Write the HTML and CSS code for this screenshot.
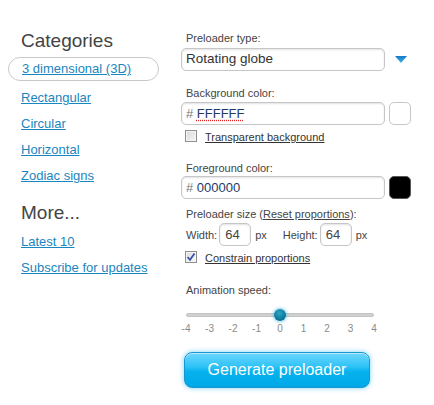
FILE: index.html
```html
<!DOCTYPE html>
<html>
<head>
<meta charset="utf-8">
<link rel="stylesheet" href="styles.css">
</head>
<body>
<div class="page">
  <aside class="sidebar">
    <h2 class="heading">Categories</h2>
    <a class="pill" href="#">3 dimensional (3D)</a>
    <a class="nav-link" href="#">Rectangular</a>
    <a class="nav-link" href="#">Circular</a>
    <a class="nav-link" href="#">Horizontal</a>
    <a class="nav-link" href="#">Zodiac signs</a>
    <h2 class="heading heading-more">More...</h2>
    <a class="nav-link" href="#">Latest 10</a>
    <a class="nav-link" href="#">Subscribe for updates</a>
  </aside>
  <main class="main">
    <div class="label">Preloader type:</div>
    <div class="row select-row">
      <div class="select">Rotating globe</div>
      <svg class="arrow" width="12" height="8" viewBox="0 0 12 8">
        <defs>
          <linearGradient id="ag" x1="0" y1="0" x2="0" y2="1">
            <stop offset="0" stop-color="#1479c4"/>
            <stop offset="1" stop-color="#3cb6ea"/>
          </linearGradient>
        </defs>
        <polygon points="0,0 12,0 6,7" fill="url(#ag)"/>
      </svg>
    </div>

    <div class="label label-bg">Background color:</div>
    <div class="row color-row">
      <div class="input color-input"><span class="hash">#</span> <span class="value misspelled">FFFFFF</span></div>
      <div class="swatch swatch-white"></div>
    </div>
    <div class="check-row check-row-top">
      <span class="checkbox"></span>
      <a class="check-link" href="#">Transparent background</a>
    </div>

    <div class="label label-fg">Foreground color:</div>
    <div class="row color-row color-row-fg">
      <div class="input color-input"><span class="hash">#</span> <span class="value">000000</span></div>
      <div class="swatch swatch-black"></div>
    </div>

    <div class="label label-size">Preloader size (<a class="check-link" href="#">Reset proportions</a>):</div>
    <div class="row size-row">
      <span class="size-text">Width:</span>
      <div class="input size-input">64</div>
      <span class="size-text unit">px</span>
      <span class="size-text height-label">Height:</span>
      <div class="input size-input">64</div>
      <span class="size-text unit">px</span>
    </div>
    <div class="check-row check-row-size">
      <span class="checkbox checked">
        <svg width="10" height="10" viewBox="0 0 10 10"><path d="M1.5 5 L4 7.8 L8.5 1.5" fill="none" stroke="#3a53a4" stroke-width="1.8"/></svg>
      </span>
      <a class="check-link" href="#">Constrain proportions</a>
    </div>

    <div class="label label-speed">Animation speed:</div>
    <div class="slider">
      <div class="track"></div>
      <div class="thumb"></div>
    </div>
    <div class="ticks">
      <span>-4</span><span>-3</span><span>-2</span><span>-1</span><span>0</span><span>1</span><span>2</span><span>3</span><span>4</span>
    </div>

    <button class="generate">Generate preloader</button>
  </main>
</div>
</body>
</html>
```

FILE: styles.css
```css
* { box-sizing: border-box; }
html, body { margin: 0; padding: 0; background: #fff; }
body {
  font-family: "Liberation Sans", Arial, sans-serif;
  color: #444;
}
.page {
  display: flex;
  width: 434px;
  height: 405px;
}
.sidebar {
  width: 181px;
  padding-left: 8px;
  padding-top: 30px;
  display: flex;
  flex-direction: column;
  align-items: flex-start;
}
.heading {
  margin: 0 0 5px 13px;
  font-size: 19px;
  line-height: 22px;
  font-weight: normal;
  color: #444;
}
.heading-more {
  margin-top: 13px;
  margin-bottom: 5px;
}
.pill {
  display: block;
  width: 151px;
  height: 24px;
  border: 1px solid #c9c9c9;
  border-radius: 12px;
  padding-left: 13px;
  margin-bottom: 4px;
  font-size: 13px;
  line-height: 22px;
  color: #1a86c0;
  text-decoration: underline;
}
.nav-link {
  display: block;
  padding-left: 13px;
  font-size: 13px;
  line-height: 26px;
  color: #1a86c0;
  text-decoration: underline;
}
.main {
  width: 253px;
  padding-top: 32px;
  display: flex;
  flex-direction: column;
  align-items: flex-start;
}
.label {
  font-size: 11px;
  line-height: 13px;
  color: #444;
  padding-left: 5px;
}
.label-bg { margin-top: 16px; }
.label-fg { margin-top: 18px; }
.label-size { margin-top: 9px; }
.label-speed { margin-top: 19px; }
.row {
  display: flex;
  align-items: center;
}
.select-row { margin-top: 3px; }
.select {
  width: 204px;
  height: 23px;
  border: 1px solid #c6c6c6;
  border-radius: 5px;
  box-shadow: inset 0 1px 2px rgba(0,0,0,0.12);
  padding: 0 0 2px 4px;
  display: flex;
  align-items: center;
  font-size: 13.5px;
  color: #333;
}
.arrow {
  margin-left: 10px;
  margin-top: 1px;
}
.input {
  height: 23px;
  border: 1px solid #c6c6c6;
  border-radius: 5px;
  box-shadow: inset 0 1px 2px rgba(0,0,0,0.12);
  background: #fff;
  font-size: 13px;
  line-height: 21px;
  padding-left: 4px;
}
.color-row { margin-top: 2px; }
.color-row-fg { margin-top: 1px; }
.color-input {
  width: 204px;
}
.hash { color: #777; }
.value { color: #243a66; }
.misspelled {
  text-decoration: underline dotted #e02020;
  text-underline-offset: 2px;
}
.swatch {
  width: 22px;
  height: 23px;
  margin-left: 4px;
  border-radius: 5px;
  border: 1px solid #c6c6c6;
}
.swatch-white { background: #fff; }
.swatch-black { background: #000; border-color: #555; }
.check-row {
  display: flex;
  align-items: center;
  height: 15px;
  padding-left: 4px;
}
.check-row-top { margin-top: 4px; }
.check-row-size { margin-top: 4px; }
.checkbox {
  width: 12px;
  height: 12px;
  border: 1px solid #8f8f8f;
  background: linear-gradient(135deg, #d8d8d8, #f6f6f6);
  box-shadow: inset 0 0 0 1px #f4f4f4;
  display: flex;
  align-items: center;
  justify-content: center;
  margin-right: 8px;
  margin-top: -2px;
}
.checkbox.checked { background: linear-gradient(135deg, #dcdcdc, #f8f8f8); }
.check-link {
  font-size: 11px;
  color: #333;
  text-decoration: underline;
}
.label .check-link { color: #444; }
.size-row {
  margin-top: 2px;
  height: 23px;
}
.size-text {
  font-size: 11px;
  color: #444;
}
.size-row > .size-text:first-child { padding-left: 5px; margin-right: 2px; }
.size-input {
  width: 32px;
  padding-left: 5px;
}
.unit { margin-left: 4px; }
.height-label { margin-left: 16px; margin-right: 2px; }
.slider {
  position: relative;
  margin-top: 11px;
  margin-left: 5px;
  width: 188px;
  height: 14px;
}
.track {
  position: absolute;
  left: 0;
  right: 0;
  top: 5px;
  height: 4px;
  border-radius: 2px;
  background: #d0d0d0;
  border: 1px solid #c4c4c4;
}
.thumb {
  position: absolute;
  left: 88px;
  top: 1px;
  width: 12px;
  height: 12px;
  border-radius: 50%;
  background: radial-gradient(circle at 45% 35%, #2aa6c4 0%, #0e7d9e 55%, #075d7e 100%);
  box-shadow: 0 0 3px 1px rgba(80,190,240,0.7);
}
.ticks {
  margin-top: 1px;
  margin-left: -1px;
  width: 200px;
  display: flex;
  justify-content: space-between;
}
.ticks span {
  width: 12px;
  text-align: center;
  font-size: 10px;
  line-height: 12px;
  color: #8a8a8a;
}
.generate {
  margin-top: 17px;
  margin-left: 3px;
  width: 186px;
  height: 36px;
  border: 1px solid #1796cf;
  border-radius: 8px;
  background: linear-gradient(#6fd6fc 0%, #2ec3f7 40%, #05b1ee 55%, #00a8e6 100%);
  box-shadow: inset 0 1px 0 rgba(255,255,255,0.5), 0 0 4px 1px rgba(90,195,245,0.55);
  color: #fff;
  font-family: "Liberation Sans", Arial, sans-serif;
  font-size: 16px;
  padding: 0;
  cursor: pointer;
}
```
